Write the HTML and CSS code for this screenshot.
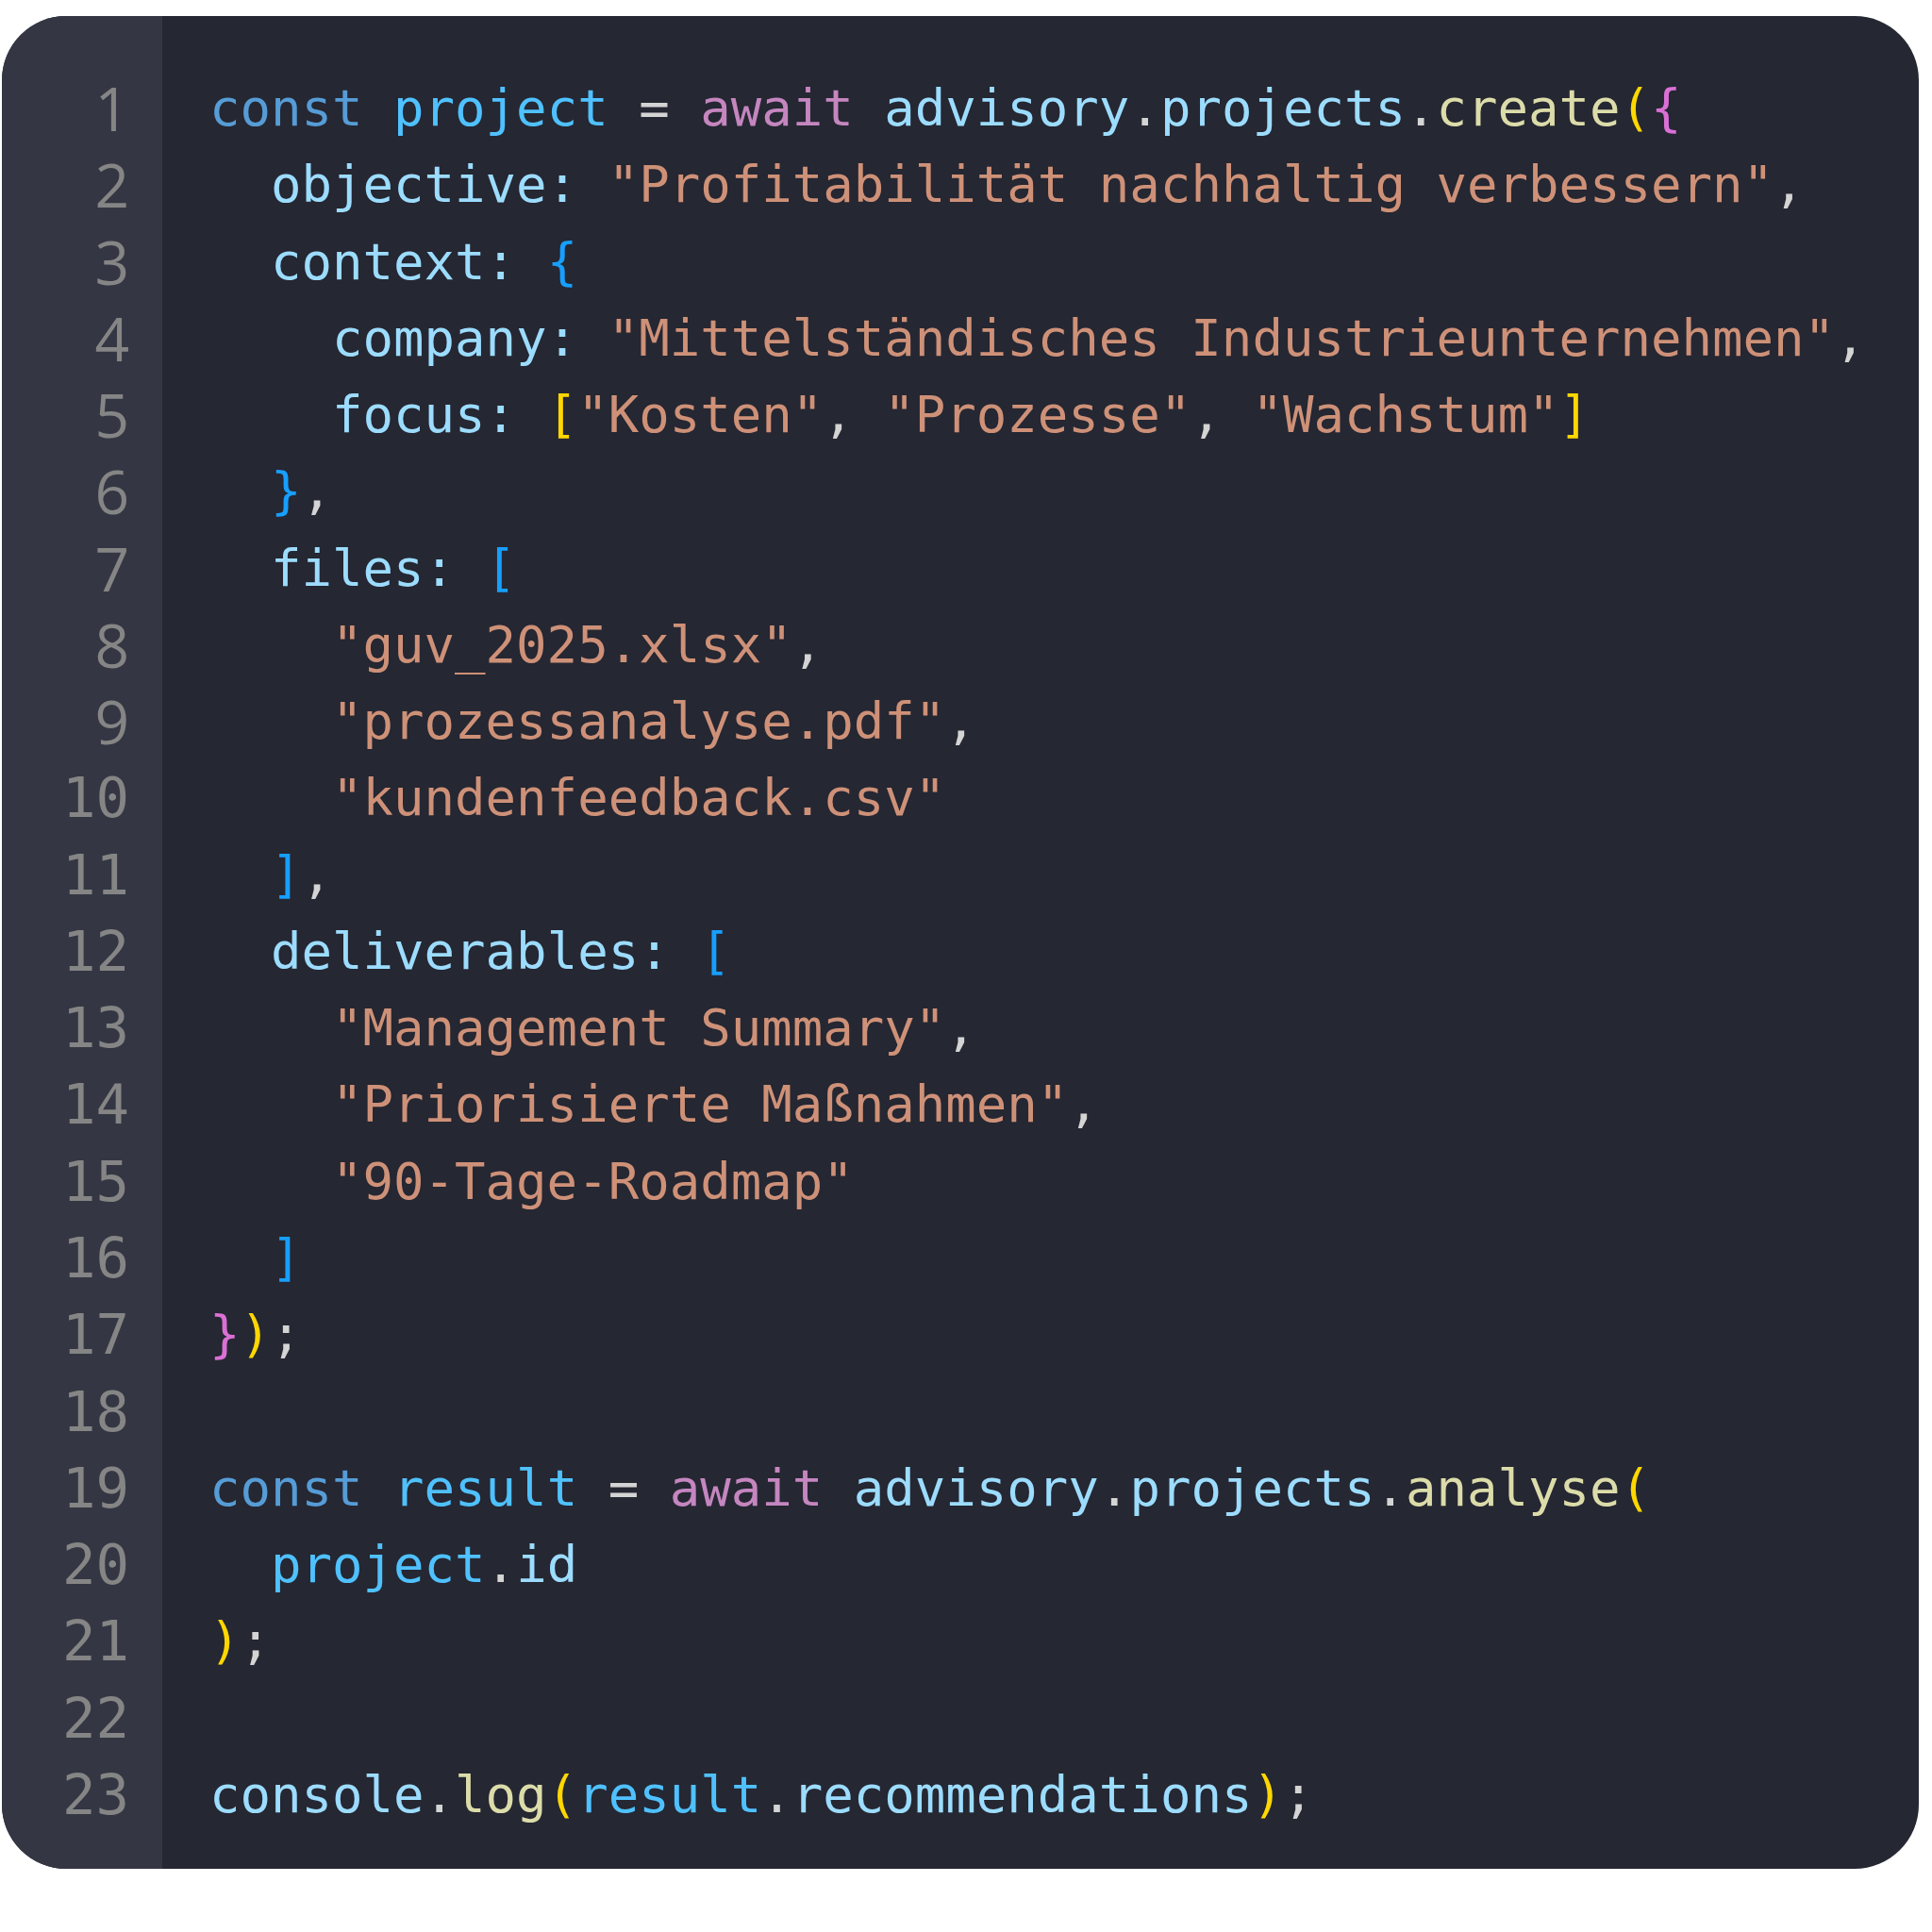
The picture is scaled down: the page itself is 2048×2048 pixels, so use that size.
FILE: index.html
```html
<!DOCTYPE html>
<html lang="de">
<head>
<meta charset="utf-8">
<title>Code</title>
<link rel="stylesheet" href="styles.css">
</head>
<body>
<div class="card">
  <div class="gutter">
    <div class="ln one">1</div>
    <div class="ln one">2</div>
    <div class="ln one">3</div>
    <div class="ln one">4</div>
    <div class="ln one">5</div>
    <div class="ln one">6</div>
    <div class="ln one">7</div>
    <div class="ln one">8</div>
    <div class="ln one">9</div>
    <div class="ln">10</div>
    <div class="ln">11</div>
    <div class="ln">12</div>
    <div class="ln">13</div>
    <div class="ln">14</div>
    <div class="ln">15</div>
    <div class="ln">16</div>
    <div class="ln">17</div>
    <div class="ln">18</div>
    <div class="ln">19</div>
    <div class="ln">20</div>
    <div class="ln">21</div>
    <div class="ln">22</div>
    <div class="ln">23</div>
  </div>
  <div class="code">
<div class="line"><span class="k">const</span> <span class="v">project</span> <span class="o">=</span> <span class="c">await</span> <span class="p">advisory</span><span class="o">.</span><span class="p">projects</span><span class="o">.</span><span class="f">create</span><span class="b1">(</span><span class="b2">{</span></div>
<div class="line">  <span class="p">objective</span><span class="p">:</span> <span class="s">"Profitabilität nachhaltig verbessern"</span><span class="o">,</span></div>
<div class="line">  <span class="p">context</span><span class="p">:</span> <span class="b3">{</span></div>
<div class="line">    <span class="p">company</span><span class="p">:</span> <span class="s">"Mittelständisches Industrieunternehmen"</span><span class="o">,</span></div>
<div class="line">    <span class="p">focus</span><span class="p">:</span> <span class="b1">[</span><span class="s">"Kosten"</span><span class="o">,</span> <span class="s">"Prozesse"</span><span class="o">,</span> <span class="s">"Wachstum"</span><span class="b1">]</span></div>
<div class="line">  <span class="b3">}</span><span class="o">,</span></div>
<div class="line">  <span class="p">files</span><span class="p">:</span> <span class="b3">[</span></div>
<div class="line">    <span class="s">"guv_2025.xlsx"</span><span class="o">,</span></div>
<div class="line">    <span class="s">"prozessanalyse.pdf"</span><span class="o">,</span></div>
<div class="line">    <span class="s">"kundenfeedback.csv"</span></div>
<div class="line">  <span class="b3">]</span><span class="o">,</span></div>
<div class="line">  <span class="p">deliverables</span><span class="p">:</span> <span class="b3">[</span></div>
<div class="line">    <span class="s">"Management Summary"</span><span class="o">,</span></div>
<div class="line">    <span class="s">"Priorisierte Maßnahmen"</span><span class="o">,</span></div>
<div class="line">    <span class="s">"90-Tage-Roadmap"</span></div>
<div class="line">  <span class="b3">]</span></div>
<div class="line"><span class="b2">}</span><span class="b1">)</span><span class="o">;</span></div>
<div class="line"> </div>
<div class="line"><span class="k">const</span> <span class="v">result</span> <span class="o">=</span> <span class="c">await</span> <span class="p">advisory</span><span class="o">.</span><span class="p">projects</span><span class="o">.</span><span class="f">analyse</span><span class="b1">(</span></div>
<div class="line">  <span class="v">project</span><span class="o">.</span><span class="p">id</span></div>
<div class="line"><span class="b1">)</span><span class="o">;</span></div>
<div class="line"> </div>
<div class="line"><span class="p">console</span><span class="o">.</span><span class="f">log</span><span class="b1">(</span><span class="v">result</span><span class="o">.</span><span class="p">recommendations</span><span class="b1">)</span><span class="o">;</span></div>
  </div>
</div>
</body>
</html>
```
FILE: styles.css
```css
html, body {
  margin: 0;
  padding: 0;
  background: #ffffff;
}

body {
  padding: 17px 0 0 2px;
}

.card {
  display: flex;
  width: 2032px;
  height: 1964px;
  border-radius: 68px;
  overflow: hidden;
  background: #252732;
}

.gutter {
  width: 170px;
  flex: 0 0 170px;
  box-sizing: border-box;
  background: #343743;
  padding: 57px 35px 0 0;
  display: flex;
  flex-direction: column;
  align-items: flex-end;
}

.ln {
  height: 81.27px;
  line-height: 81.27px;
  font-family: "DejaVu Sans Mono", "Liberation Mono", monospace;
  font-size: 59px;
  color: #858585;
}

.ln.one {
  font-family: "Open Sans", "Noto Sans", sans-serif;
  font-size: 64px;
  font-weight: 400;
}

.code {
  flex: 1;
  box-sizing: border-box;
  padding: 57px 0 0 50px;
  font-family: "DejaVu Sans Mono", "Liberation Mono", monospace;
  font-size: 54px;
  letter-spacing: 0;
  color: #d4d4d4;
}

.line {
  height: 81.27px;
  line-height: 81.27px;
  white-space: pre;
}

.k { color: #569cd6; }
.v { color: #4fc1ff; }
.c { color: #c586c0; }
.p { color: #9cdcfe; }
.f { color: #dcdcaa; }
.s { color: #ce9178; }
.o { color: #d4d4d4; }
.b1 { color: #ffd700; }
.b2 { color: #da70d6; }
.b3 { color: #179fff; }
```
